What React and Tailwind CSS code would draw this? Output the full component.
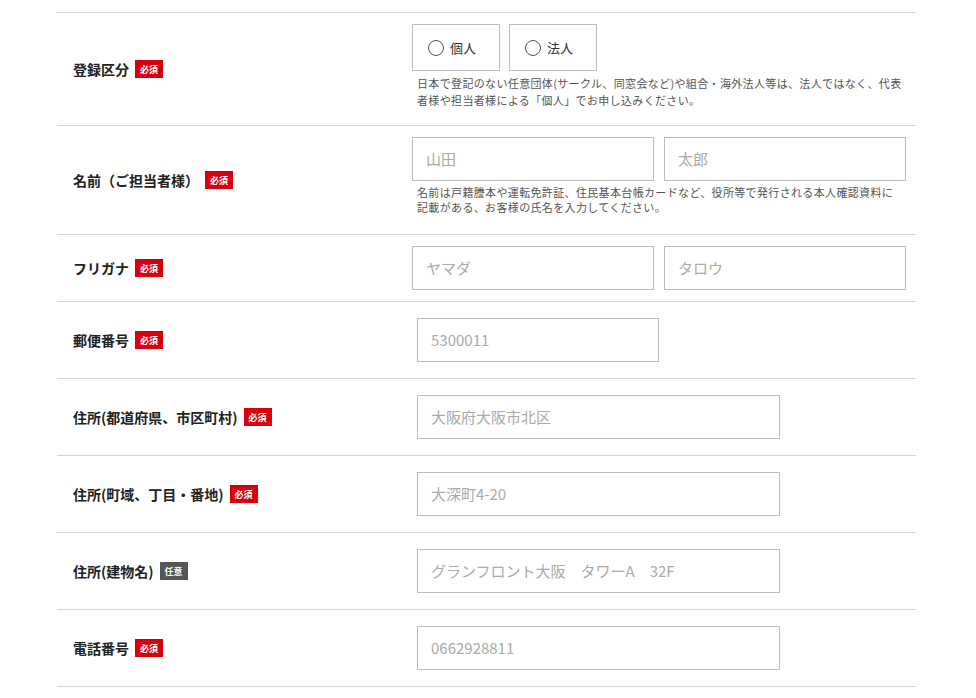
const F = { fontFamily: '"Noto Sans CJK JP", "Noto Sans", sans-serif' };

function Badge({ opt }) {
  return (
    <span className={`inline-flex items-center justify-center w-[28px] h-[18px] text-[9px] font-bold text-white leading-none ml-[6px] ${opt ? 'bg-[#555]' : 'bg-[#d8000c]'}`}>
      {opt ? '任意' : '必須'}
    </span>
  );
}

function Input({ ph, w }) {
  return (
    <div className={`${w} h-[44px] border border-[#bdbdbd] flex items-center px-[13px] text-[15px] text-[#aaa]`}>{ph}</div>
  );
}

const LBL = "pl-[16px] flex items-center text-[14px] font-bold text-[#222] shrink-0";

export default function App() {
  return (
    <div style={F} className="bg-white w-[976px] h-[698px] overflow-hidden">
      <div className="ml-[57px] w-[859px] mt-[12px] border-t border-[#d4d4d4]">
        <div className="flex items-center border-b border-[#d4d4d4] h-[113px]">
          <div className={`w-[355px] ${LBL}`}>登録区分<Badge /></div>
          <div className="flex flex-col self-start pt-[11px]">
            <div className="flex gap-[9px]">
              {['個人', '法人'].map(t => (
                <div key={t} className="h-[47px] px-[15px] w-[88px] border border-[#bdbdbd] flex items-center gap-[6px] text-[13px] text-[#333]">
                  <span className="w-[16px] h-[16px] rounded-full border border-[#555]"></span>{t}
                </div>
              ))}
            </div>
            <div className="text-[11px] leading-[17px] text-[#555] mt-[4px] pl-[5px] w-[492px] tracking-[0.35px]">日本で登記のない任意団体(サークル、同窓会など)や組合・海外法人等は、法人ではなく、代表者様や担当者様による「個人」でお申し込みください。</div>
          </div>
        </div>
        <div className="flex items-center border-b border-[#d4d4d4] h-[109px]">
          <div className={`w-[355px] ${LBL}`}>名前（ご担当者様）<Badge /></div>
          <div className="flex flex-col self-start pt-[11px]">
            <div className="flex gap-[10px]"><Input ph="山田" w="w-[242px]" /><Input ph="太郎" w="w-[242px]" /></div>
            <div className="text-[11px] leading-[15px] text-[#555] mt-[4px] pl-[5px] w-[484px] tracking-[0.35px]">名前は戸籍謄本や運転免許証、住民基本台帳カードなど、役所等で発行される本人確認資料に記載がある、お客様の氏名を入力してください。</div>
          </div>
        </div>
        <div className="flex items-center border-b border-[#d4d4d4] h-[67px]">
          <div className={`w-[355px] ${LBL}`}>フリガナ<Badge /></div>
          <div className="flex gap-[10px]"><Input ph="ヤマダ" w="w-[242px]" /><Input ph="タロウ" w="w-[242px]" /></div>
        </div>
        {[
          ['郵便番号', '5300011', 'w-[242px]', false],
          ['住所(都道府県、市区町村)', '大阪府大阪市北区', 'w-[363px]', false],
          ['住所(町域、丁目・番地)', '大深町4-20', 'w-[363px]', false],
          ['住所(建物名)', 'グランフロント大阪　タワーA　32F', 'w-[363px]', true],
          ['電話番号', '0662928811', 'w-[363px]', false],
        ].map(([l, p, w, o]) => (
          <div key={l} className="flex items-center border-b border-[#d4d4d4] h-[77px]">
            <div className={`w-[360px] ${LBL}`}>{l}<Badge opt={o} /></div>
            <Input ph={p} w={w} />
          </div>
        ))}
      </div>
    </div>
  );
}
